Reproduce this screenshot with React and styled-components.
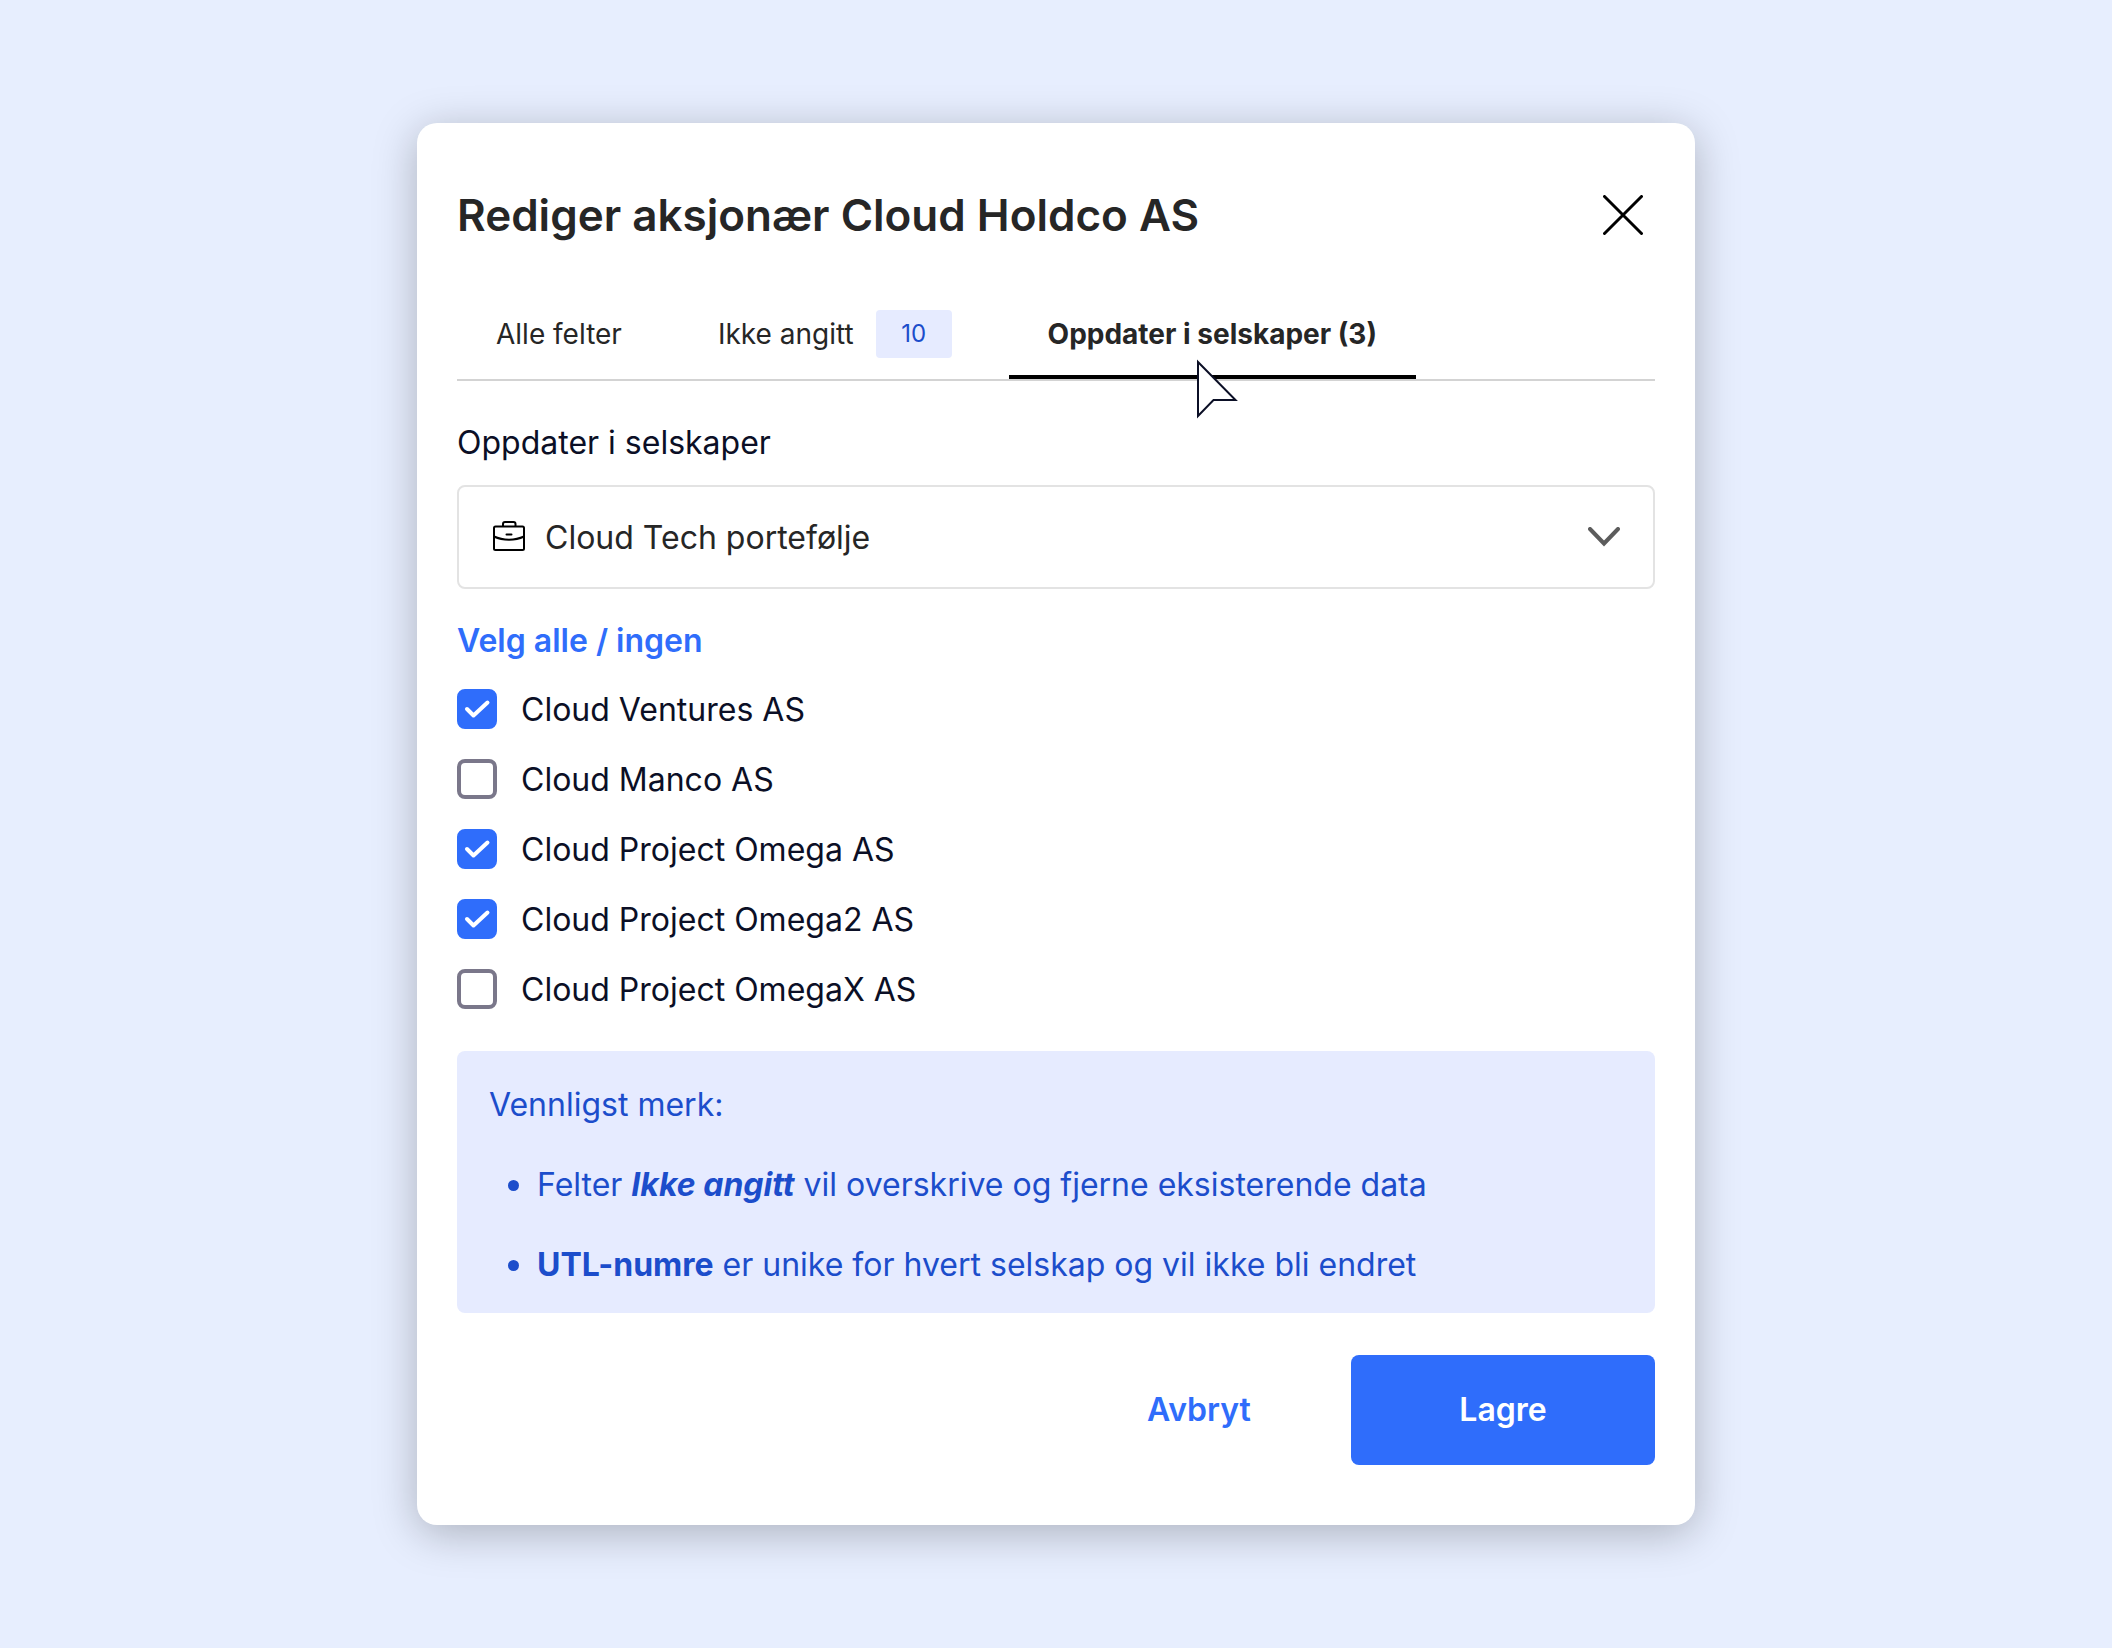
import React, { useState } from "react";
import styled, { createGlobalStyle } from "styled-components";

const companies = [
  { id: "ventures", name: "Cloud Ventures AS", checked: true },
  { id: "manco", name: "Cloud Manco AS", checked: false },
  { id: "omega", name: "Cloud Project Omega AS", checked: true },
  { id: "omega2", name: "Cloud Project Omega2 AS", checked: true },
  { id: "omegax", name: "Cloud Project OmegaX AS", checked: false },
];

const App = () => {
  const [list, setList] = useState(companies);

  const toggle = (id) =>
    setList(list.map((c) => (c.id === id ? { ...c, checked: !c.checked } : c)));

  const toggleAll = () => {
    const all = list.every((c) => c.checked);
    setList(list.map((c) => ({ ...c, checked: !all })));
  };

  return (
    <>
      <GlobalStyle />
      <Page>
        <Modal role="dialog" aria-labelledby="modal-title">
          <Header>
            <Title id="modal-title">Rediger aksjonær Cloud Holdco AS</Title>
            <CloseButton type="button" aria-label="Lukk">
              <svg width="40" height="40" viewBox="0 0 40 40" fill="none">
                <path
                  d="M1.5 1.5L38.5 38.5M38.5 1.5L1.5 38.5"
                  stroke="#000"
                  strokeWidth="3"
                  strokeLinecap="round"
                />
              </svg>
            </CloseButton>
          </Header>

          <Tabs role="tablist">
            <Tab type="button" role="tab" aria-selected="false">
              Alle felter
            </Tab>
            <Tab type="button" role="tab" aria-selected="false">
              Ikke angitt <Badge>10</Badge>
            </Tab>
            <Tab type="button" role="tab" aria-selected="true" $active>
              Oppdater i selskaper (3)
              <Pointer width="42" height="60" viewBox="0 0 42 60" aria-hidden="true">
                <path
                  d="M2 3L39.500 41H17.500L2 57Z"
                  fill="#fff"
                  stroke="#0b0f26"
                  strokeWidth="2"
                />
              </Pointer>
            </Tab>
          </Tabs>

          <Label htmlFor="portfolio">Oppdater i selskaper</Label>
          <SelectWrap>
            <Briefcase width="34" height="32" viewBox="0 0 34 32" aria-hidden="true">
              <path d="M11 6V4A2 2 0 0 1 13 2H21.500A2 2 0 0 1 23.500 4V6" />
              <rect x="2" y="6.500" width="30" height="23.500" rx="1.500" />
              <path d="M2 16.500C11 20.800 23 20.800 32 16.500M14.500 14.500H19.500" />
            </Briefcase>
            <Select id="portfolio" defaultValue="cloud-tech">
              <option value="cloud-tech">Cloud Tech portefølje</option>
            </Select>
            <Chevron width="32" height="20" viewBox="0 0 32 20" aria-hidden="true">
              <path d="M2 2L16 16.500L30 2" />
            </Chevron>
          </SelectWrap>

          <ToggleAll type="button" onClick={toggleAll}>
            Velg alle / ingen
          </ToggleAll>

          <CheckList>
            {list.map((company) => (
              <CheckRow key={company.id}>
                <CheckLabel htmlFor={company.id}>
                  <Checkbox
                    id={company.id}
                    type="checkbox"
                    checked={company.checked}
                    onChange={() => toggle(company.id)}
                  />
                  <Tick width="40" height="40" viewBox="0 0 40 40" aria-hidden="true">
                    <path d="M10 20L16.500 26.500L30.500 13.500" />
                  </Tick>
                  <CheckText>{company.name}</CheckText>
                </CheckLabel>
              </CheckRow>
            ))}
          </CheckList>

          <Notice>
            <p>Vennligst merk:</p>
            <ul>
              <li>
                <span>
                  Felter <strong><em>Ikke angitt</em></strong> vil overskrive og
                  fjerne eksisterende data
                </span>
              </li>
              <li>
                <span>
                  <strong>UTL-numre</strong> er unike for hvert selskap og vil
                  ikke bli endret
                </span>
              </li>
            </ul>
          </Notice>

          <Footer>
            <Button type="button">Avbryt</Button>
            <Button type="button" $primary>
              Lagre
            </Button>
          </Footer>
        </Modal>
      </Page>
    </>
  );
};

const GlobalStyle = createGlobalStyle`
  * {
    box-sizing: border-box;
    margin: 0;
    padding: 0;
  }
  body {
    background: #e7eefe;
    color: #0b0f26;
    font-family: Inter, "Liberation Sans", sans-serif;
    font-size: 32px;
    line-height: 40px;
  }
  button,
  select {
    border: none;
    background: none;
    color: inherit;
    font: inherit;
    cursor: pointer;
  }
`;

const Page = styled.main`
  display: flex;
  align-items: center;
  justify-content: center;
  min-height: 100vh;
  padding: 40px;
`;

const Modal = styled.section`
  display: flex;
  flex-direction: column;
  width: 100%;
  max-width: 1278px;
  padding: 60px 40px;
  border-radius: 20px;
  background: #fff;
  box-shadow: 0 8px 44px rgba(0, 0, 0, 0.26);
`;

const Header = styled.header`
  display: flex;
  align-items: center;
  justify-content: space-between;
  padding-right: 12px;
`;

const Title = styled.h1`
  color: #262626;
  font-size: 44px;
  font-weight: 600;
  line-height: 64px;
`;

const CloseButton = styled.button`
  display: flex;
`;

const Tabs = styled.div`
  display: flex;
  gap: 18px;
  margin-top: 40px;
  border-bottom: 2px solid #d3d3d3;
`;

const Tab = styled.button`
  position: relative;
  display: flex;
  align-items: center;
  gap: 22px;
  height: 92px;
  padding: 6px 39px 0;
  border-bottom: 4px solid ${({ $active }) => ($active ? "#000" : "transparent")};
  color: #262626;
  font-size: 28px;
  font-weight: ${({ $active }) => ($active ? 700 : 400)};
`;

const Badge = styled.span`
  min-width: 76px;
  border-radius: 4px;
  background: #e6ebff;
  color: #1c4dcb;
  font-size: 24px;
  line-height: 48px;
  text-align: center;
`;

const Pointer = styled.svg`
  position: absolute;
  top: 72px;
  left: 187px;
  z-index: 1;
`;

const Label = styled.label`
  margin-top: 42px;
`;

const SelectWrap = styled.div`
  position: relative;
  margin-top: 22px;
`;

const Select = styled.select`
  display: block;
  width: 100%;
  height: 104px;
  padding: 2px 80px 0 86px;
  border: 2px solid #e3e3e3;
  border-radius: 8px;
  color: #262626;
  appearance: none;
`;

const Briefcase = styled.svg`
  position: absolute;
  top: 35px;
  left: 35px;
  fill: none;
  stroke: #000;
  stroke-width: 2;
  stroke-linecap: round;
  pointer-events: none;
`;

const Chevron = styled.svg`
  position: absolute;
  top: 42px;
  right: 35px;
  fill: none;
  stroke: #5c5c5c;
  stroke-width: 4;
  stroke-linecap: round;
  pointer-events: none;
`;

const ToggleAll = styled.button`
  align-self: flex-start;
  margin-top: 32px;
  color: #2f6dfb;
  font-weight: 600;
`;

const CheckList = styled.ul`
  display: flex;
  flex-direction: column;
  gap: 30px;
  margin-top: 28px;
  list-style: none;
`;

const CheckRow = styled.li`
  display: flex;
`;

const CheckLabel = styled.label`
  position: relative;
  display: flex;
  align-items: center;
  gap: 24px;
  height: 40px;
  cursor: pointer;
`;

const CheckText = styled.span`
  padding-top: 2px;
`;

const Checkbox = styled.input`
  width: 40px;
  height: 40px;
  border: 4px solid #7a778a;
  border-radius: 8px;
  appearance: none;

  &:checked {
    border-color: #2f6dfb;
    background: #2f6dfb;
  }
`;

const Tick = styled.svg`
  position: absolute;
  top: 0;
  left: 0;
  fill: none;
  stroke: #fff;
  stroke-width: 4;
  stroke-linecap: round;
  stroke-linejoin: round;
  pointer-events: none;
`;

const Notice = styled.div`
  margin-top: 42px;
  padding: 34px 32px 28px;
  border-radius: 8px;
  background: #e6ebff;
  color: #1c4dcb;

  ul {
    list-style: none;
  }
  li {
    display: flex;
    align-items: center;
    gap: 18px;
    margin-top: 40px;
    padding-left: 19px;
  }
  li::before {
    content: "";
    flex: none;
    width: 11px;
    height: 11px;
    border-radius: 50%;
    background: #1c4dcb;
  }
`;

const Footer = styled.footer`
  display: flex;
  justify-content: flex-end;
  margin-top: 42px;
`;

const Button = styled.button`
  width: 304px;
  height: 110px;
  border-radius: 8px;
  background: ${({ $primary }) => ($primary ? "#2f6dfb" : "transparent")};
  color: ${({ $primary }) => ($primary ? "#fff" : "#2f6dfb")};
  font-weight: 600;
`;

export default App;
